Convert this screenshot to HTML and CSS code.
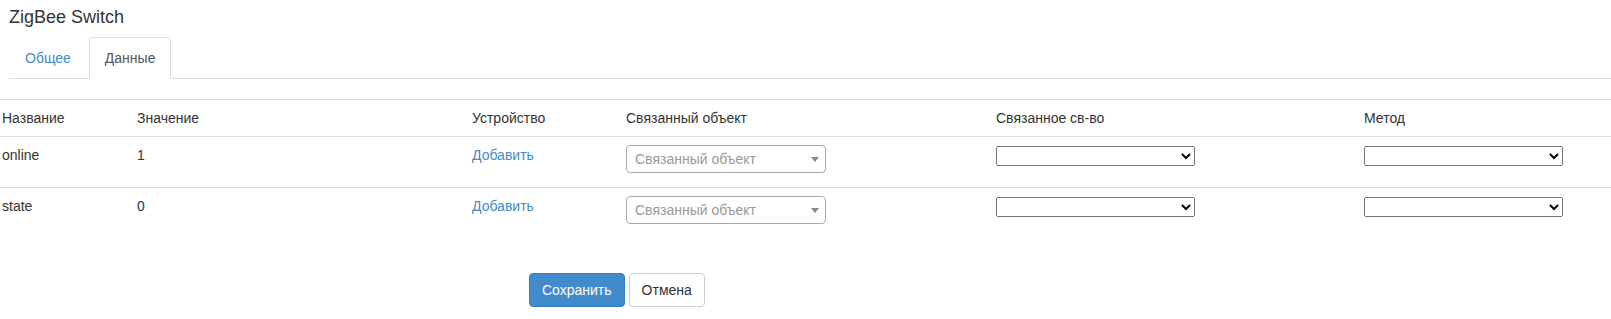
FILE: index.html
```html
<!DOCTYPE html>
<html lang="ru">
<head>
    <meta charset="UTF-8">
    <title>ZigBee Switch</title>
    <link rel="stylesheet" href="styles.css">
</head>
<body>
    <h1 class="page-title">ZigBee Switch</h1>

    <ul class="nav-tabs">
        <li><a href="#">Общее</a></li>
        <li class="active"><a href="#">Данные</a></li>
    </ul>

    <table class="data-table">
        <colgroup>
            <col class="c-name">
            <col class="c-value">
            <col class="c-device">
            <col class="c-object">
            <col class="c-prop">
            <col class="c-method">
        </colgroup>
        <thead>
            <tr>
                <th>Название</th>
                <th>Значение</th>
                <th>Устройство</th>
                <th>Связанный объект</th>
                <th>Связанное св-во</th>
                <th>Метод</th>
            </tr>
        </thead>
        <tbody>
            <tr>
                <td>online</td>
                <td>1</td>
                <td><a href="#">Добавить</a></td>
                <td>
                    <div class="select2">
                        <span class="placeholder">Связанный объект</span>
                        <span class="arrow"></span>
                    </div>
                </td>
                <td><select class="native"><option></option></select></td>
                <td><select class="native"><option></option></select></td>
            </tr>
            <tr>
                <td>state</td>
                <td>0</td>
                <td><a href="#">Добавить</a></td>
                <td>
                    <div class="select2">
                        <span class="placeholder">Связанный объект</span>
                        <span class="arrow"></span>
                    </div>
                </td>
                <td><select class="native"><option></option></select></td>
                <td><select class="native"><option></option></select></td>
            </tr>
        </tbody>
    </table>

    <div class="actions">
        <button class="btn btn-primary">Сохранить</button>
        <button class="btn btn-default">Отмена</button>
    </div>
</body>
</html>
```

FILE: styles.css
```css
* {
    box-sizing: border-box;
}

body {
    margin: 0;
    font-family: "Liberation Sans", Arial, sans-serif;
    font-size: 14px;
    line-height: 20px;
    color: #333;
    background: #fff;
}

a {
    color: #428bca;
    text-decoration: none;
}

.page-title {
    margin: 0;
    padding: 7px 9px 10px;
    font-size: 18px;
    font-weight: normal;
    line-height: 20px;
}

.nav-tabs {
    list-style: none;
    margin: 0 0 20px 9px;
    padding: 0;
    display: flex;
    border-bottom: 1px solid #ddd;
}

.nav-tabs li {
    margin-bottom: -1px;
}

.nav-tabs li a {
    display: block;
    margin-right: 2px;
    padding: 10px 15px;
    border: 1px solid transparent;
    border-radius: 4px 4px 0 0;
}

.nav-tabs li.active a {
    color: #555;
    background: #fff;
    border-color: #ddd #ddd transparent;
}

.data-table {
    width: 100%;
    table-layout: fixed;
    border-collapse: collapse;
}

.c-name { width: 135px; }
.c-value { width: 335px; }
.c-device { width: 154px; }
.c-object { width: 370px; }
.c-prop { width: 368px; }

.data-table th {
    padding: 8px 2px;
    text-align: left;
    font-weight: normal;
    border-top: 1px solid #ddd;
    border-bottom: 1px solid #ddd;
}

.data-table td {
    padding: 8px 2px 14px;
    vertical-align: top;
}

.data-table tbody tr + tr td {
    border-top: 1px solid #ddd;
}

.select2 {
    position: relative;
    width: 200px;
    height: 28px;
    border: 1px solid #aaa;
    border-radius: 4px;
    padding: 3px 8px;
    color: #999;
}

.select2 .arrow {
    position: absolute;
    top: 11px;
    right: 6px;
    border-left: 4px solid transparent;
    border-right: 4px solid transparent;
    border-top: 5px solid #888;
}

.native {
    width: 199px;
    height: 20px;
    margin: 0;
    font-family: "Liberation Sans", Arial, sans-serif;
    font-size: 13px;
}

.actions {
    display: flex;
    gap: 4px;
    margin: 35px 0 0 529px;
}

.btn {
    padding: 6px 12px;
    font-family: "Liberation Sans", Arial, sans-serif;
    font-size: 14px;
    line-height: 20px;
    border: 1px solid transparent;
    border-radius: 4px;
    cursor: pointer;
}

.btn-primary {
    color: #fff;
    background: #428bca;
    border-color: #357ebd;
}

.btn-default {
    color: #333;
    background: #fff;
    border-color: #ccc;
}
```
